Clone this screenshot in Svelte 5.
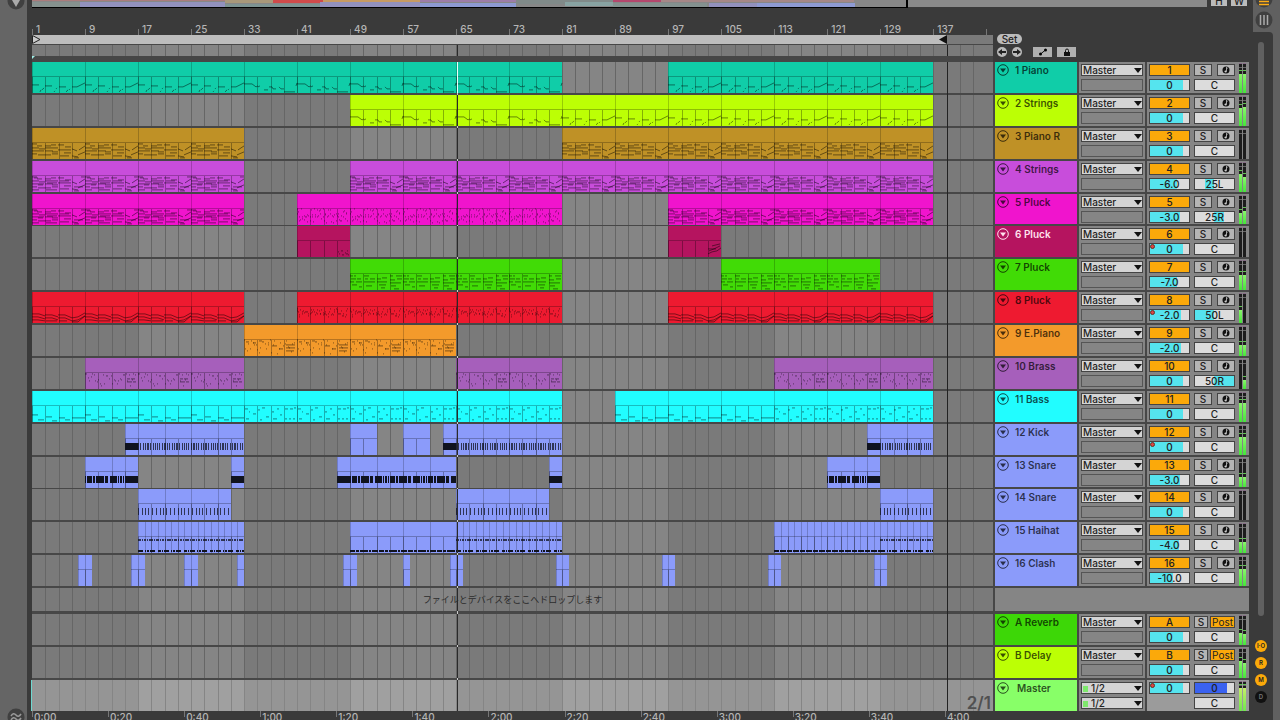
<script lang="ts">
	type Clip = [from: number, to: number, notes: string, step?: number];
	type Track = {
		id: string;
		name: string;
		color: string;
		vol: string;
		fill: number;
		pan?: string;
		auto?: boolean;
		light?: boolean;
		level: [number, number];
		clips: Clip[];
	};

	const BARS = 145;
	const W = 961;
	const U = W / BARS;
	const x = (bar: number) => Math.round((bar - 1) * U);

	const blue = '#8b9bfa';

	const tracks: Track[] = [
		{ id: '1', name: 'Piano', color: '#10cda8', vol: '0', fill: 84, level: [62, 62], clips: [[1, 33, 'melody'], [33, 81, 'drift'], [97, 137, 'melody']] },
		{ id: '2', name: 'Strings', color: '#bcff05', vol: '0', fill: 84, level: [60, 62], clips: [[49, 81, 'drift'], [81, 137, 'melody']] },
		{ id: '3', name: 'Piano R', color: '#bf9126', vol: '0', fill: 84, level: [0, 0], clips: [[1, 33, 'chords'], [81, 137, 'chords']] },
		{ id: '4', name: 'Strings', color: '#c84ddb', vol: '-6.0', fill: 70, pan: '25L', level: [60, 50], clips: [[1, 33, 'dense'], [49, 137, 'dense']] },
		{ id: '5', name: 'Pluck', color: '#f014cd', vol: '-3.0', fill: 78, pan: '25R', level: [38, 44], clips: [[1, 33, 'dense'], [41, 81, 'plucks'], [97, 137, 'dense']] },
		{ id: '6', name: 'Pluck', color: '#b5145f', vol: '0', fill: 84, auto: true, light: true, level: [0, 0], clips: [[41, 49, 'tail'], [97, 105, 'tailUp']] },
		{ id: '7', name: 'Pluck', color: '#41db06', vol: '-7.0', fill: 68, level: [52, 50], clips: [[49, 81, 'broken'], [105, 129, 'broken']] },
		{ id: '8', name: 'Pluck', color: '#ee1a30', vol: '-2.0', fill: 80, pan: '50L', auto: true, level: [45, 0], clips: [[1, 33, 'wave'], [41, 81, 'busy'], [97, 137, 'wave']] },
		{ id: '9', name: 'E.Piano', color: '#f39a2b', vol: '-2.0', fill: 80, level: [38, 38], clips: [[33, 65, 'keys']] },
		{ id: '10', name: 'Brass', color: '#a65fbb', vol: '0', fill: 84, pan: '50R', level: [0, 28], clips: [[9, 33, 'stabs'], [65, 81, 'stabs'], [113, 137, 'stabs']] },
		{ id: '11', name: 'Bass', color: '#21fdff', vol: '0', fill: 84, level: [62, 62], clips: [[1, 33, 'bass'], [33, 81, 'bassDots'], [89, 113, 'bass'], [113, 137, 'bassDots']] },
		{ id: '12', name: 'Kick', color: blue, vol: '0', fill: 84, auto: true, level: [58, 58], clips: [[15, 17, 'solid'], [17, 33, 'kick', 4], [49, 53, 'none'], [57, 61, 'none'], [63, 65, 'solid'], [65, 81, 'kick', 4], [127, 129, 'solid'], [129, 137, 'kick', 4]] },
		{ id: '13', name: 'Snare', color: blue, vol: '-3.0', fill: 78, level: [36, 36], clips: [[9, 15, 'snare', 4], [15, 17, 'solid'], [31, 33, 'solid'], [47, 49, 'solid'], [49, 65, 'snare', 4], [79, 81, 'solid'], [121, 127, 'snare', 4], [127, 129, 'solid']] },
		{ id: '14', name: 'Snare', color: blue, vol: '0', fill: 84, level: [0, 0], clips: [[17, 31, 'tick', 4], [65, 79, 'tick', 4], [129, 137, 'tick', 4]] },
		{ id: '15', name: 'Haihat', color: blue, vol: '-4.0', fill: 75, level: [36, 36], clips: [[17, 33, 'hat', 1], [49, 65, 'hatLow', 4], [65, 81, 'hat', 1], [113, 129, 'hatEven', 1], [129, 137, 'hat', 1]] },
		{ id: '16', name: 'Clash', color: blue, vol: '-10.0', fill: 60, level: [56, 56], clips: [[8, 10, 'none', 1], [16, 18, 'none', 1], [24, 26, 'none', 1], [32, 33, 'none', 1], [48, 50, 'none', 1], [57, 58, 'none', 1], [64, 66, 'none', 1], [80, 82, 'none', 1], [96, 98, 'none', 1], [112, 114, 'none', 1], [128, 130, 'none', 1]] }
	];

	const returns: Track[] = [
		{ id: 'A', name: 'Reverb', color: '#3dd707', vol: '0', fill: 84, level: [40, 36], clips: [] },
		{ id: 'B', name: 'Delay', color: '#bcff05', vol: '0', fill: 84, level: [56, 50], clips: [] }
	];

	// eight-bar phrases, 53 units wide and 16 high
	function scatter(seed: number, count: number, len: number, top = 0, bottom = 15) {
		let s = seed;
		const next = () => (s = (s * 16807) % 2147483647) / 2147483647;
		let d = '';
		for (let i = 0; i < count; i++) {
			const px = Math.floor((i * 52) / count);
			d += `M${px} ${top + Math.floor(next() * (bottom - top))}h${len}`;
		}
		return d;
	}

	const chordLines =
		'M0 1h5M5 3h5M0 5h7M7 6h6M0 8h12M0 11h5M6 12h7' +
		'M13 3h6M19 2h5M13 5h13M13 8h8M20 9h6M13 12h6M20 11h6' +
		'M26 2h6M33 4h6M26 7h13M32 10h7M28 13h9' +
		'M40 6l5 2M47 7l6-4M40 13l6 1M46 12l7-3M42 15h5';

	const phrases: Record<string, string> = {
		melody: 'M0 8h7M8 15l1-2M10 13l2-2M13 9h7M22 15l1-1M24 12l1-1M27 10h7M34 15l2-2M37 13l1-1M40 10h5l8-4',
		drift: 'M0 7h8l4 3 2-1M14 10l2-1M20 13h4M25 10h3l1 2h3M35 10l2 2h3M40 15h11M52 9l1-3',
		chords: chordLines,
		dense: chordLines + 'M2 2h4M6 9h5M0 14h7M15 7h10M14 14h11M28 5h9M42 11h9M49 1h4',
		plucks: scatter(17, 44, 1) + scatter(91, 20, 1, 5, 9),
		tail: 'M41 11h1M44 10h2M48 12h1M50 10h1M42 13h1M45 14h2M49 13h2M51 14h1',
		tailUp: 'M40 13l4-2 5-1 4-3M41 10l5-2 6-3M40 8h8M44 5l8-2',
		broken:
			'M0 2h3M4 2h2M1 5h5M7 5h4M0 8h4M6 8h6M2 11h5M9 13h3' +
			'M14 2h5M15 5h3M20 5h5M14 8h11M16 12h6M27 5h4M32 4h5M27 8h10M29 11h7M31 14h4' +
			'M40 2h3M46 2h6M40 6h5M47 5h5M40 9h11M41 12h5M44 15h5',
		wave: 'M0 7h7l6 2M13 8h7l6 2M26 8h7l7 3 6-1 7-4M0 10h6l7 2M13 11h7l6 2M26 11h7l7 3 6-1 7-4M0 13h6l7 1M14 14h11M27 14h8M40 15h6l7-6',
		busy: scatter(33, 40, 1, 2, 11) + scatter(7, 18, 1, 4, 9),
		keys: scatter(5, 34, 1) + 'M2 2h3M9 3h3M15 1h3M24 3h1M28 6h4M35 9h3M42 5h9M42 8h9M42 11h8',
		stabs: scatter(23, 34, 1, 1, 14) + 'M42 6h3M46 6h4M42 9h5M48 9h3',
		bass: 'M0 9h6M6 14h6M14 11h6M20 15h5M27 12h6M33 14h5M40 12h13',
		bassDots: 'M1 3h3M5 6h1M9 8h3M2 13h3M14 4h2M18 2h3M22 11h3M16 14h2M28 6h2M33 3h2M36 9h2M29 13h4M41 3h3M46 3h3M50 2h2M41 13h2M45 13h2M49 13h2'
	};

	// drum lanes as alternating hit / rest widths
	const drums: Record<string, { y: number; h: number; seq: number[]; soft?: boolean }[]> = {
		solid: [{ y: 19, h: 7, seq: [99] }],
		kick: [{ y: 19, h: 7, soft: true, seq: [1, 1, 1, 2, 1, 1, 1, 1, 2, 1, 1, 2, 1, 1, 1, 1, 1, 1, 1, 2, 1, 1, 2, 1] }],
		snare: [{ y: 19, h: 7, seq: [1, 1, 5, 1, 2, 1, 8, 1, 3, 2, 7, 1, 1, 1, 2, 1] }],
		tick: [{ y: 19, h: 7, soft: true, seq: [1, 3, 1, 2, 1, 2, 1, 3, 1, 3] }],
		hat: [
			{ y: 17, h: 2, soft: true, seq: [3, 1, 1, 1, 2, 1, 1, 1, 4, 1, 1, 1] },
			{ y: 28, h: 2, seq: [5, 2, 1, 1, 2, 1, 5, 3, 3, 1, 1, 1] }
		],
		hatLow: [{ y: 28, h: 2, seq: [5, 1, 3, 1, 8, 1, 2, 1, 6, 1] }],
		hatEven: [{ y: 28, h: 2, seq: [5, 1, 6, 1] }],
		none: []
	};

	function hits(start: number, end: number, seq: number[]) {
		const out: { x: number; w: number }[] = [];
		let at = start;
		for (let i = 0; at < end; i++) {
			const w = seq[i % seq.length];
			if (i % 2 === 0) out.push({ x: at, w: Math.min(w, end - at) });
			at += w;
		}
		return out;
	}

	function range(from: number, to: number, step: number) {
		const out: number[] = [];
		for (let i = from; i < to; i += step) out.push(i);
		return out;
	}

	function panFill(pan = 'C') {
		if (pan === 'C') return { from: 50, to: 50 };
		const n = parseInt(pan);
		return pan.endsWith('L') ? { from: 50 - n, to: 50 } : { from: 50, to: 50 + n };
	}

	const barLabels = range(1, 138, 8);
	const times = ['0:00', '0:20', '0:40', '1:00', '1:20', '1:40', '2:00', '2:20', '2:40', '3:00', '3:20', '3:40', '4:00'];

	const overview = [
		[0, 0, 193, 1, '#a97c7c'], [48, 2, 145, 5, '#9291bd'], [193, 0, 48, 3, '#a8987a'],
		[241, 0, 50, 3, '#cf4a4a'], [291, 0, 97, 2, '#c69a63'], [193, 4, 95, 3, '#7d9392'],
		[0, 2, 48, 5, '#86918e'], [288, 2, 100, 5, '#9291bd'], [388, 0, 97, 2, '#9d7da8'],
		[388, 3, 97, 4, '#8e9ad2'], [485, 0, 97, 4, '#808a89'], [534, 2, 48, 4, '#88a3a2'],
		[582, 0, 48, 2, '#b3476d'], [630, 0, 193, 2, '#a58787'], [582, 3, 94, 4, '#84918f'],
		[678, 3, 48, 4, '#9291bd'], [726, 3, 98, 4, '#8e9ad2']
	] as [number, number, number, number, string][];
</script>

{#snippet lane(clips: Clip[], height: number, sep: number, first = false, bright = false)}
	<svg class="lane" viewBox="0 0 {W} {height}" preserveAspectRatio="none" shape-rendering="crispEdges">
		<rect width={W} {height} fill={bright ? '#959595' : '#7a7a7a'} />
		{#each range(17, BARS, 32) as bar}
			<rect x={x(bar)} width={Math.min(x(bar + 16), W) - x(bar)} {height} fill={bright ? '#a0a0a0' : '#858585'} />
		{/each}
		{#each range(3, BARS, 2) as bar}
			<rect x={x(bar)} width="1" {height} fill={bright ? '#858585' : '#666'} />
		{/each}
		{@render arranged(clips)}
		<rect y={height - sep} width={W} height={sep} fill="#474747" />
		<rect x={x(65) + 1} width="1" height={height - sep} fill={first ? '#eefffa' : '#2a2a2a'} />
		<rect x={x(65) + 1} y={height - sep} width="1" height={sep} fill="#ccc" />
		<rect x={x(139)} width="1" {height} fill="#222" />
	</svg>
{/snippet}

{#snippet arranged(clips: Clip[])}
	{#each clips as [from, to, notes, step = 8]}
		<rect class="clip" x={x(from)} width={x(to) - x(from)} height="31" />
		<rect x={x(from)} y="14" width={x(to) - x(from)} height="1" fill="#000" opacity="0.25" />
		{#each range(from + (from % 2 ? 0 : 1), to, 2) as bar}
			<rect x={x(bar)} y="15" width="1" height="16" fill="#000" opacity="0.3" />
		{/each}
		{#each range(from, to, step) as bar}
			<rect x={x(bar)} width="1" height="31" fill="#000" opacity="0.2" />
		{/each}
		{#if phrases[notes]}
			{#each range(from, to, 8) as bar}
				<path d={phrases[notes]} transform="translate({x(bar)} 15)" fill="none" stroke="#000" stroke-opacity="0.6" stroke-width="0.8" shape-rendering="auto" />
			{/each}
		{:else}
			{#each drums[notes] as d}
				{#each hits(x(from), x(to), d.seq) as hit}
					<rect x={hit.x} y={d.y} width={hit.w} height={d.h} fill="#10131f" opacity={d.soft ? 0.75 : 1} />
				{/each}
			{/each}
		{/if}
	{/each}
{/snippet}

{#snippet fold()}
	<svg class="fold" viewBox="0 0 12 12"><circle cx="6" cy="6" r="5.3" fill="none" stroke="currentColor" /><path d="M3 4.500h6L6 8.500z" fill="currentColor" /></svg>
{/snippet}

{#snippet meter(level: [number, number])}
	<div class="meter">
		{#each level as l}
			<div class="channel">
				{#if l > 0}<i class="peak" style="bottom: {l + 10}%"></i>{/if}
				<i class="level" style="height: {l}%"></i>
			</div>
		{/each}
	</div>
{/snippet}

{#snippet volume(t: { name: string; vol: string; fill: number; auto?: boolean })}
	<div class="slot">
		<input class="value" aria-label="{t.name} volume" value={t.vol} style="--from: 0%; --to: {t.fill}%" />
		{#if t.auto}<span class="auto"></span>{/if}
	</div>
{/snippet}

{#snippet row(t: Track, isReturn: boolean, first: boolean)}
	<div class="row" style="--color: {t.color}">
		{@render lane(t.clips, 33, 2, first)}
		<div class="head" class:light={t.light}>
			<button class="fold-btn" aria-label="Fold {t.name}">{@render fold()}</button>
			<span>{t.id} {t.name}</span>
		</div>
		<div class="routing">
			<div class="pick">
				<select aria-label="{t.name} output"><option>Master</option></select>
			</div>
			<div class="empty"></div>
		</div>
		<div class="mixer">
			<div class="strip">
				<button class="on">{t.id}</button>
				<div class="pair">
					{#if isReturn}
						<button class="solo narrow">S</button>
						<button class="on post">Post</button>
					{:else}
						<button class="solo">S</button>
						<button class="solo" aria-label="Arm {t.name}">
							<svg viewBox="0 0 8 8"><circle cx="4" cy="4" r="3.500" fill="#111" /><path d="M4 1v3.500a1.200 1 0 1 0 .8.9V2l1 .8V2z" fill="#ccc" /></svg>
						</button>
					{/if}
				</div>
				{@render volume(t)}
				<input class="value" aria-label="{t.name} pan" value={t.pan ?? 'C'} style="--from: {panFill(t.pan).from}%; --to: {panFill(t.pan).to}%" />
			</div>
			{@render meter(t.level)}
		</div>
	</div>
{/snippet}

<div class="live">
	<aside class="rail">
		<svg class="browser" viewBox="0 0 18 10"><circle cx="9" cy="1" r="8.500" fill="#404040" /><path d="M5 0h8L9 7z" fill="#aaa" /></svg>
		<svg class="groove" viewBox="0 0 18 12"><circle cx="9" cy="9" r="8.500" fill="#404040" /><path d="M4 8q2.500-4 5-1t5-1M4 12q2.500-4 5-1t5-1" fill="none" stroke="#999" stroke-width="1.500" /></svg>
	</aside>

	<main>
		<div class="overview">
			<div class="map">
				<svg viewBox="0 0 875 7" preserveAspectRatio="none" shape-rendering="crispEdges">
					<rect width="875" height="7" fill="#878787" />
					{#each overview as [ox, oy, w, h, color]}
						<rect x={ox} y={oy} width={w} height={h} fill={color} />
					{/each}
				</svg>
			</div>
			<div class="beyond"></div>
			<button class="zoom">H</button>
			<button class="zoom">W</button>
		</div>

		<div class="top">
			<div class="time">
				<div class="ruler">
					{#each barLabels as bar}
						<span>{bar}</span>
					{/each}
					<span></span>
				</div>
				<div class="loop">
					<div class="brace">
						<svg viewBox="0 0 8 9"><path d="M.5.500v8L8 4.500z" fill="#ccc" stroke="#222" /></svg>
						<svg viewBox="0 0 8 9"><path d="M8 0v9L0 4.500z" fill="#111" /></svg>
					</div>
				</div>
				<div class="scrub">{@render lane([], 11, 0)}</div>
				<div class="locators"><i></i></div>
			</div>
			<div class="tools">
				<button class="set">Set</button>
				<div class="tool-row">
					<button class="round" aria-label="Previous locator"><svg viewBox="0 0 10 10"><path d="M1 5l4-3v2h4v2H5v2z" fill="#222" /></svg></button>
					<button class="round" aria-label="Next locator"><svg viewBox="0 0 10 10"><path d="M9 5L5 2v2H1v2h4v2z" fill="#222" /></svg></button>
					<button class="tool auto-mode" aria-label="Automation mode"><svg viewBox="0 0 10 8"><path d="M2 6.500L8 1.500" stroke="#111" /><circle cx="2.500" cy="6" r="1.500" /><circle cx="7.500" cy="2" r="1.500" /></svg></button>
					<button class="tool" aria-label="Lock envelopes"><svg viewBox="0 0 10 8"><path d="M2 4h6v4H2z" fill="#111" /><path d="M3.500 4V2.500a1.500 1.500 0 0 1 3 0V4" fill="none" stroke="#111" /></svg></button>
				</div>
			</div>
		</div>

		<div class="tracks">
			{#each tracks as t, i}
				{@render row(t, false, i === 0)}
			{/each}
		</div>

		<div class="drop">
			<div class="drop-lane">
				{@render lane([], 26, 3)}
				<span>ファイルとデバイスをここへドロップします</span>
			</div>
			<div class="drop-side"></div>
		</div>

		<div class="returns">
			{#each returns as t}
				{@render row(t, true, false)}
			{/each}
		</div>

		<div class="row master" style="--color: #88ff68">
			<div class="master-lane">
				{@render lane([], 31, 0, false, true)}
				<span class="grid-size">2/1</span>
			</div>
			<div class="head">
				<button class="fold-btn" aria-label="Fold Master">{@render fold()}</button>
				<span>Master</span>
			</div>
			<div class="routing">
				{#each ['Cue out', 'Master out'] as label}
					<div class="pick out">
						<select aria-label={label}><option>1/2</option></select>
						<i></i>
					</div>
				{/each}
			</div>
			<div class="mixer">
				<div class="strip">
					{@render volume({ name: 'Master', vol: '0', fill: 84, auto: true })}
					<input class="value cue" aria-label="Cue volume" value="0" style="--from: 0%; --to: 82%" />
					<span></span>
					<input class="value" aria-label="Master pan" value="C" style="--from: 50%; --to: 50%" />
				</div>
				{@render meter([76, 76])}
			</div>
		</div>

		<div class="clock">
			<div class="times">
				{#each times as time}
					<span>{time}</span>
				{/each}
			</div>
		</div>
	</main>

	<aside class="side">
		<div class="views">
			<svg viewBox="0 0 18 32">
				<circle cx="9" cy="-1" r="8.500" fill="#404040" /><path d="M4 1.500h10M4 4.500h10" stroke="#ffad14" stroke-width="1.500" />
				<circle cx="9" cy="20" r="8.500" fill="#404040" /><path d="M5.500 15v10M9 15v10M12.500 15v10" stroke="#aaa" stroke-width="1.500" />
			</svg>
		</div>
		<div class="well">
			<div class="scroll"></div>
			<button class="toggle">I·O</button>
			<button class="toggle">R</button>
			<button class="toggle">M</button>
			<button class="toggle off">D</button>
		</div>
	</aside>
</div>

<style>
	:global(body) {
		background: #3a3a3a;
	}

	.live {
		display: grid;
		grid-template-columns: 27px 1fr 31px;
		height: 100vh;
		min-height: 640px;
		overflow: hidden;
		background: #3a3a3a;
		font-family: Inter, 'Noto Sans CJK JP', sans-serif;
		font-size: 10px;
		font-weight: 500;
		line-height: 12px;
		color: #222;
	}

	button,
	input,
	select {
		box-sizing: border-box;
		min-width: 0;
		margin: 0;
		padding: 0;
		border: 1px solid #444;
		border-radius: 0;
		font: inherit;
		color: inherit;
		line-height: 10px;
	}

	svg {
		display: block;
	}

	.rail {
		display: flex;
		flex-direction: column;
		justify-content: space-between;
		align-items: center;
		background: #656565;
	}

	.browser {
		width: 18px;
		height: 10px;
		margin-left: 4px;
	}

	.groove {
		width: 18px;
		height: 12px;
		margin-left: 4px;
	}

	main {
		display: flex;
		flex-direction: column;
		min-width: 0;
		min-height: 0;
		padding-left: 5px;
	}

	.overview {
		display: grid;
		grid-template-columns: 875fr 300fr 16px 16px;
		column-gap: 4px;
		height: 8px;
		padding-right: 2px;
	}

	.map {
		margin-right: -4px;
		border: solid #000;
		border-width: 0 2px 1px 0;
	}

	.map svg {
		width: 100%;
		height: 7px;
	}

	.beyond {
		height: 7px;
		background: #8a8a8a;
	}

	.zoom {
		height: 6px;
		padding-bottom: 3px;
		border: 0;
		background: #bbb;
		line-height: 3px;
	}

	.top {
		display: grid;
		grid-template-columns: 1fr 254px;
		column-gap: 2px;
		height: 54px;
	}

	.ruler {
		display: grid;
		grid-template-columns: repeat(18, 8fr) 1fr;
		align-items: end;
		height: 27px;
		color: #b5b5b5;
	}

	.ruler span {
		height: 6px;
		padding-left: 3px;
		border-left: 1px solid #777;
		line-height: 0;
	}

	.loop {
		display: grid;
		grid-template-columns: 138fr 7fr;
		height: 9px;
		background: #7a7a7a;
	}

	.brace {
		display: flex;
		justify-content: space-between;
		background: #bdbdbd;
	}

	.brace svg {
		width: 8px;
		height: 9px;
	}

	.scrub {
		height: 11px;
		border-top: 1px solid #474747;
	}

	.locators {
		height: 6px;
		background: #464646;
	}

	.locators i {
		display: block;
		width: 3px;
		height: 3px;
		background: #9ff0e8;
		clip-path: polygon(0 0, 100% 0, 0 100%);
	}

	.tools {
		display: flex;
		flex-direction: column;
		align-items: flex-start;
		gap: 3px;
		padding: 26px 2px 0;
	}

	.set {
		width: 25px;
		height: 10px;
		border: 0;
		border-radius: 5px;
		background: #bbb;
	}

	.tool-row {
		display: flex;
		gap: 5px;
	}

	.round {
		width: 10px;
		height: 10px;
		border: 0;
		border-radius: 50%;
		background: #bbb;
	}

	.tool {
		display: flex;
		justify-content: center;
		align-items: center;
		width: 19px;
		height: 10px;
		border: 0;
		background: #b0b0b0;
	}

	.tool svg {
		width: 10px;
		height: 8px;
	}

	.auto-mode {
		margin-left: 6px;
	}

	.tracks {
		flex: 1;
		display: grid;
		grid-auto-rows: 1fr;
		min-height: 0;
	}

	.row {
		display: grid;
		grid-template-columns: 1fr 82px 66px 102px;
		column-gap: 2px;
		min-height: 0;
		background: #474747;
	}

	.returns .row {
		height: 33px;
	}

	.master {
		height: 31px;
	}

	.lane {
		width: 100%;
		height: 100%;
		min-height: 0;
		overflow: hidden;
	}

	.clip {
		fill: var(--color);
	}

	.head,
	.routing,
	.mixer {
		min-height: 0;
		margin-bottom: 2px;
		background: #858585;
	}

	.master .head,
	.master .routing,
	.master .mixer {
		margin-bottom: 0;
	}

	.master .mixer {
		background: #9b9b9b;
	}

	.head {
		display: flex;
		align-items: flex-start;
		gap: 6px;
		padding: 2px 0 0 2px;
		background: var(--color);
		font-weight: 600;
		color: rgba(0, 0, 0, 0.7);
		white-space: nowrap;
	}

	.head.light {
		color: #ffe3ee;
	}

	.master .head span {
		padding-left: 2px;
	}

	.fold-btn {
		width: 12px;
		height: 12px;
		border: 0;
		background: none;
	}

	.fold {
		width: 12px;
		height: 12px;
	}

	.routing {
		display: flex;
		flex-direction: column;
		gap: 3px;
		padding: 2px 2px 0;
	}

	.pick {
		position: relative;
		height: 12px;
	}

	.pick select {
		display: block;
		width: 100%;
		height: 12px;
		padding-left: 1px;
		appearance: none;
		background: #d4d4d4;
	}

	.pick::after {
		content: '';
		position: absolute;
		top: 4px;
		right: 1px;
		border: solid transparent;
		border-width: 5px 4px 0;
		border-top-color: #111;
	}

	.out select {
		padding-left: 9px;
	}

	.out i {
		position: absolute;
		top: 4px;
		left: 2px;
		width: 5px;
		height: 6px;
		background: #7ee86c;
	}

	.empty {
		height: 10px;
		border: 1px solid #555;
	}

	.mixer {
		display: flex;
		gap: 4px;
		padding-left: 2px;
	}

	.strip {
		display: grid;
		grid-template-columns: 41px 41px;
		grid-template-rows: 12px 12px;
		gap: 3px 4px;
		padding-top: 2px;
	}

	.on {
		height: 12px;
		background: #fba90a;
	}

	.pair {
		display: flex;
		justify-content: space-between;
	}

	.solo {
		display: flex;
		justify-content: center;
		align-items: center;
		width: 18px;
		height: 12px;
		background: #b5b5b5;
	}

	.solo svg {
		width: 8px;
		height: 8px;
	}

	.narrow {
		width: 14px;
	}

	.post {
		width: 25px;
		font-weight: 400;
	}

	.slot {
		position: relative;
		height: 12px;
	}

	.value {
		--bar: #55e4ee;
		display: block;
		width: 41px;
		height: 12px;
		background: linear-gradient(90deg, #dcdcdc var(--from), var(--bar) var(--from), var(--bar) var(--to), #dcdcdc var(--to));
		text-align: center;
	}

	.cue {
		--bar: #3a62f0;
	}

	.auto {
		position: absolute;
		top: 1px;
		left: 1px;
		width: 3px;
		height: 3px;
		border: 1px solid #632;
		border-radius: 50%;
		background: #d44;
	}

	.meter {
		display: flex;
		gap: 1px;
		padding-top: 1px;
	}

	.channel {
		position: relative;
		width: 3px;
		background: linear-gradient(#856a85 0 1px, #1c1c1c 1px 4px, #666 4px 5px, #1c1c1c 5px);
	}

	.level {
		position: absolute;
		inset: auto 0 0;
		background: linear-gradient(#8bf56c, #45e53a);
	}

	.master .level {
		background: linear-gradient(#c6ee6a, #6fe84c);
	}

	.peak {
		position: absolute;
		left: 0;
		width: 3px;
		height: 1px;
		background: #5fc552;
	}

	.drop {
		display: grid;
		grid-template-columns: 1fr 254px;
		column-gap: 2px;
		height: 26px;
		background: #474747;
	}

	.drop-lane,
	.master-lane {
		position: relative;
		min-width: 0;
		min-height: 0;
	}

	.drop-lane span {
		position: absolute;
		inset: 6px 0 auto;
		font-size: 9px;
		font-weight: 400;
		text-align: center;
		color: #2c2c2c;
	}

	.drop-side {
		margin-bottom: 3px;
		background: #858585;
	}

	.master-lane {
		box-shadow: -1px 0 #6fd8d0;
	}

	.grid-size {
		position: absolute;
		right: 2px;
		bottom: 2px;
		font-size: 17px;
		font-weight: 600;
		color: #505050;
	}

	.clock {
		height: 9px;
		padding-right: 256px;
	}

	.times {
		display: grid;
		grid-template-columns: repeat(12, 19fr) 12fr;
		color: #b5b5b5;
		line-height: 13px;
	}

	.times span {
		padding-left: 2px;
		background: linear-gradient(#777, #777) 0 0 / 1px 6px no-repeat;
	}

	.side {
		display: flex;
		flex-direction: column;
		background: #606060;
	}

	.views {
		height: 32px;
		padding-left: 2px;
		border-left: 4px solid #3a3a3a;
	}

	.views svg {
		width: 18px;
		height: 32px;
	}

	.well {
		flex: 1;
		display: flex;
		flex-direction: column;
		align-items: center;
		gap: 5px;
		width: 24px;
		padding: 10px 0 17px;
		border-top-right-radius: 4px;
		box-sizing: border-box;
		background: #3a3a3a;
	}

	.scroll {
		flex: 1;
		width: 6px;
		margin-bottom: 19px;
		border-radius: 3px;
		background: #606060;
	}

	.toggle {
		width: 12px;
		height: 12px;
		border: 0;
		border-radius: 50%;
		background: #fba90a;
		font-size: 6px;
		font-weight: 600;
	}

	.toggle.off {
		background: #111;
		color: #777;
	}
</style>
